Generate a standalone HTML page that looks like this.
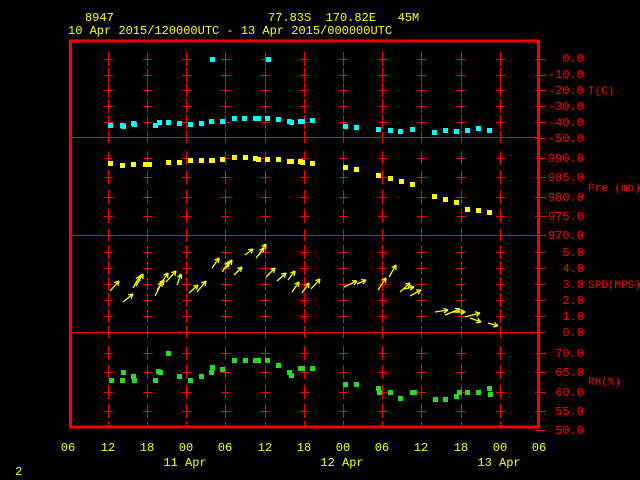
<!DOCTYPE html>
<html><head><meta charset="utf-8"><style>
html,body{margin:0;padding:0;background:#000;width:640px;height:480px;overflow:hidden}
svg{display:block}
text{font-family:"Liberation Mono","DejaVu Sans Mono",monospace;font-size:12px}
.y{fill:#ffff00}.r{fill:#ff0000}
</style></head><body>
<svg id="s" width="640" height="480" viewBox="0 0 640 480" xmlns="http://www.w3.org/2000/svg">
<rect width="640" height="480" fill="#000"/>
<g id="grid" fill="#ff0000"></g>
<rect x="70.5" y="41" width="468" height="386" fill="none" stroke="#ff0000" stroke-width="3"/>
<g fill="#ff0000">
<rect x="70" y="137" width="469" height="1"/>
<rect x="70" y="235" width="469" height="1"/>
<rect x="70" y="332" width="469" height="1"/>
</g>
<g id="pts"></g>
<g id="arr" stroke="#ffff00" stroke-width="1.3" fill="none"></g>
<text class="y" x="85" y="21">8947</text>
<text class="y" x="268" y="21" xml:space="preserve">77.83S  170.82E   45M</text>
<text class="y" x="68" y="34">10 Apr 2015/120000UTC - 13 Apr 2015/000000UTC</text>
<g class="r" text-anchor="end">
<text x="584" y="62">0.0</text><text x="584" y="78">-10.0</text><text x="584" y="94">-20.0</text><text x="584" y="110">-30.0</text><text x="584" y="126">-40.0</text><text x="584" y="142">-50.0</text>
<text x="584" y="162">990.0</text><text x="584" y="181">985.0</text><text x="584" y="201">980.0</text><text x="584" y="220">975.0</text><text x="584" y="239">970.0</text>
<text x="584" y="256">5.0</text><text x="584" y="272">4.0</text><text x="584" y="288">3.0</text><text x="584" y="304">2.0</text><text x="584" y="320">1.0</text><text x="584" y="336">0.0</text>
<text x="584" y="357">70.0</text><text x="584" y="376">65.0</text><text x="584" y="396">60.0</text><text x="584" y="415">55.0</text><text x="584" y="434">50.0</text>
</g>
<g class="r">
<text x="588" y="94" style="font-size:11px">T(C)</text>
<text x="588" y="191" style="font-size:11px">Pre (mb)</text>
<text x="588" y="288" style="font-size:11px">SPD(MPS)</text>
<text x="588" y="385" style="font-size:11px">RH(%)</text>
</g>
<g class="y" text-anchor="middle">
<text x="68" y="451">06</text><text x="108" y="451">12</text><text x="147" y="451">18</text><text x="186" y="451">00</text><text x="225" y="451">06</text><text x="265" y="451">12</text><text x="304" y="451">18</text><text x="343" y="451">00</text><text x="382" y="451">06</text><text x="421" y="451">12</text><text x="461" y="451">18</text><text x="500" y="451">00</text><text x="539" y="451">06</text>
<text x="185" y="466">11 Apr</text><text x="342" y="466">12 Apr</text><text x="499" y="466">13 Apr</text>
</g>
<text class="y" x="15" y="475">2</text>
</svg>
<script>
var NS="http://www.w3.org/2000/svg";
function el(p,n,a){var e=document.createElementNS(NS,n);for(var k in a)e.setAttribute(k,a[k]);p.appendChild(e);return e;}
var g=document.getElementById('grid');
function R(x,y,w,h){el(g,'rect',{x:x,y:y,width:w,height:h});}
var xs=[108,147,186,225,265,304,343,382,421,461,500];
var lv=[59,75,90,106,122,158,177,197,216,252,268,284,300,316,353,372,392,411];
var bd=[137,235,332];
xs.forEach(function(x){
 lv.forEach(function(y){R(x,y-7,1,14);R(x-4,y,9,1);});
 bd.forEach(function(y){R(x,y-6,1,12);});
 R(x,421,1,6);
});
[59,75,90,106,122,138,158,177,197,216,235,252,268,284,300,316,332,353,372,392,411,430].forEach(function(y){R(535,y,11,1);});
var P=document.getElementById('pts');
function pts(arr,c){arr.forEach(function(p){el(P,'rect',{x:p[0]-2,y:p[1]-2,width:5,height:5,fill:c});});}
pts([[110,125],[122,125],[123,126],[133,123],[134,124],[155,125],[159,122],[168,122],[179,123],[190,124],[201,123],[211,121],[222,121],[234,118],[244,118],[255,118],[258,118],[267,118],[278,119],[289,121],[291,122],[300,121],[302,121],[312,120],[212,59],[268,59],[345,126],[356,127],[378,129],[390,130],[400,131],[412,129],[434,132],[445,130],[456,131],[467,130],[478,128],[489,130]],'#00ffff');
pts([[110,163],[122,165],[133,164],[145,164],[149,164],[168,162],[179,162],[190,160],[201,160],[211,160],[212,160],[222,159],[234,157],[245,157],[255,158],[258,159],[267,159],[278,159],[289,161],[291,161],[300,161],[302,162],[312,163],[345,167],[356,169],[378,175],[390,178],[401,181],[412,184],[434,196],[445,199],[456,202],[467,209],[478,210],[489,212]],'#ffff00');
pts([[111,380],[122,380],[123,372],[133,376],[134,380],[155,380],[158,371],[160,372],[168,353],[179,376],[190,380],[201,376],[211,372],[212,367],[222,369],[234,360],[245,360],[255,360],[258,360],[267,360],[278,365],[289,372],[291,375],[300,368],[302,368],[312,368],[345,384],[356,384],[378,388],[379,392],[390,392],[400,398],[412,392],[414,392],[435,399],[445,399],[456,396],[459,392],[467,392],[478,392],[489,388],[490,394]],'#22dd22');
var A=document.getElementById('arr');
function ar(x1,y1,x2,y2){el(A,'line',{x1:x1,y1:y1,x2:x2,y2:y2});
 var a=Math.atan2(y2-y1,x2-x1),L=5;
 [0.5,-0.5].forEach(function(d){el(A,'line',{x1:x2,y1:y2,x2:x2-L*Math.cos(a+d),y2:y2-L*Math.sin(a+d)});});}
[[110,291,119,281],[123,302,133,294],[133,288,140,276],[136,286,143,274],[155,296,162,282],[157,290,164,280],[160,285,168,273],[166,282,176,271],[177,285,181,274],[189,293,198,285],[197,292,206,281],[212,268,219,258],[222,272,229,262],[226,268,232,260],[234,275,242,267],[245,255,253,249],[256,258,264,248],[259,255,266,244],[266,277,275,268],[277,281,286,273],[288,280,295,271],[292,292,299,282],[302,293,309,283],[311,289,320,279],[344,287,357,281],[357,284,366,280],[378,290,386,278],[389,277,396,265],[400,292,410,283],[410,296,421,290],[404,289,414,287],[435,312,448,310],[445,315,460,309],[452,312,465,312],[465,317,480,313],[470,318,481,322],[488,323,498,326]].forEach(function(a){ar(a[0],a[1],a[2],a[3]);});
</script>
</body></html>
